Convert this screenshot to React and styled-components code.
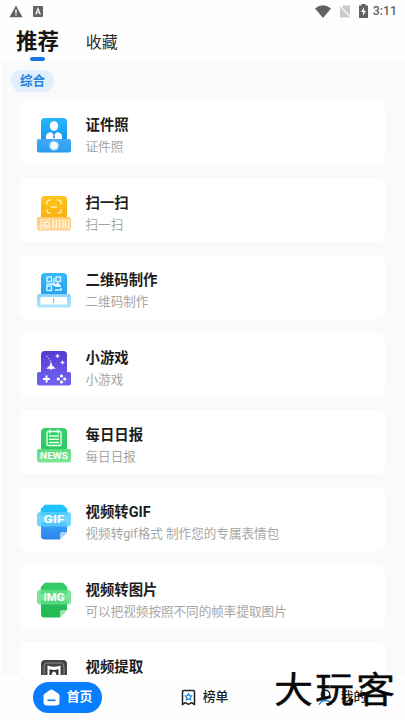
import React from "react"
import styled, { createGlobalStyle } from "styled-components"

const GlobalStyle = createGlobalStyle`
    * {
        box-sizing: border-box;
    }
    body {
        margin: 0;
        background: #fff;
        font-family: Roboto, "Noto Sans CJK SC", sans-serif;
    }
    svg {
        display: block;
        flex-shrink: 0;
    }
`

const Screen = styled.div`
    position: relative;
    display: flex;
    flex-direction: column;
    width: 405px;
    height: 720px;
    overflow: hidden;
    background: #fefefe;
`

const StatusBar = styled.div`
    display: flex;
    justify-content: space-between;
    align-items: center;
    height: 22px;
    padding: 0 8px 0 9px;
`

const StatusGroup = styled.div`
    display: flex;
    align-items: center;
    gap: ${({ $gap }) => $gap};
`

const Clock = styled.span`
    margin-left: -3px;
    color: #606060;
    font-size: 12.3px;
    font-weight: 500;
    line-height: 22px;
`

const Tabs = styled.div`
    display: flex;
    height: 39px;
    padding-left: 16px;
    gap: 27px;
`

const Tab = styled.div`
    display: flex;
    flex-direction: column;
    align-items: center;
    padding-top: ${({ $active }) => $active ? "2px" : "3px"};
    color: ${({ $active }) => $active ? "#151515" : "#2c2c2c"};
    font-size: ${({ $active }) => $active ? "21.4px" : "16px"};
    font-weight: ${({ $active }) => $active ? 700 : 400};
    line-height: 35px;
`

const TabLine = styled.div`
    width: 15px;
    height: 4px;
    margin-top: -2px;
    border-radius: 2px;
    background: #1478e6;
`

const Content = styled.div`
    flex: 1;
    min-height: 0;
    margin-left: 2px;
    padding: 9px 20px 0 9px;
    overflow: hidden;
    background: #fafafa;
`

const Category = styled.div`
    width: 43px;
    height: 22px;
    border-radius: 11px;
    background: #e1effc;
    color: #2183dc;
    font-size: 12.6px;
    font-weight: 700;
    line-height: 22px;
    text-align: center;
`

const List = styled.div`
    display: flex;
    flex-direction: column;
    gap: 13.4px;
    margin: 8.4px 0 0 9px;
`

const Card = styled.div`
    display: flex;
    flex-shrink: 0;
    height: 64px;
    padding: 17px 16px 0;
    border-radius: 7px;
    background: #fff;
`

const CardText = styled.div`
    margin: -1px 0 0 13.5px;
    white-space: nowrap;
`

const Title = styled.div`
    color: #1d1d1d;
    font-size: 14.4px;
    font-weight: 700;
    line-height: 20px;
`

const Desc = styled.div`
    margin-top: 1px;
    color: #a6a6a6;
    font-size: 12.58px;
    line-height: 19px;
`

const NavBar = styled.div`
    display: flex;
    flex-shrink: 0;
    align-items: center;
    height: 45px;
    padding-left: 33px;
    background: #fefefe;
`

const NavItem = styled.div`
    display: flex;
    flex-shrink: 0;
    align-items: center;
    justify-content: center;
    gap: 7px;
    width: 69px;
    height: 31px;
    margin-right: 68px;
    border-radius: 16px;
    background: ${({ $active }) => $active ? "#087eff" : "transparent"};
    color: ${({ $active }) => $active ? "#fff" : "#222"};
    font-size: 12.8px;
    font-weight: ${({ $active }) => $active ? 700 : 500};
    line-height: 29px;
    white-space: nowrap;
`

const NavLabel = styled.span`
    height: 31px;
`

const Watermark = styled.div`
    position: absolute;
    left: 274px;
    top: 665px;
    color: #080808;
    font-family: "Noto Sans CJK SC", sans-serif;
    font-size: 39px;
    font-weight: 400;
    line-height: 44px;
    letter-spacing: 2px;
    white-space: nowrap;
    transform: scaleY( 0.92 );
    -webkit-text-stroke: 0.4px #080808;
`

const Gradient = ({ id, from, to }) => (
    <linearGradient id={ id } x1="0" y1="0" x2="0" y2="1">
        <stop offset="0" stopColor={ from }/>
        <stop offset="1" stopColor={ to }/>
    </linearGradient>
)

// 위쪽 몸체 + 아래쪽 받침대 모양 아이콘
const StandIcon = ({ id, top, base, children }) => (
    <svg width="36" height="38" viewBox="0 0 36 38">
        <defs>
            <Gradient id={ `${id}_top` } from={ top[0] } to={ top[1] }/>
            <Gradient id={ `${id}_base` } from={ base[0] } to={ base[1] }/>
        </defs>
        <rect x="5" y="1" width="26" height="27" rx="4" fill={ `url(#${id}_top)` }/>
        <rect x="1" y="22" width="34" height="13.5" rx="2" fill={ `url(#${id}_base)` }/>
        { children }
    </svg>
)

// 모서리가 접힌 문서 모양 아이콘
const FileIcon = ({ id, top, bottom, band, fold, label }) => (
    <svg width="36" height="38" viewBox="0 0 36 38">
        <defs>
            <Gradient id={ `${id}_top` } from={ top[0] } to={ top[1] }/>
            <Gradient id={ `${id}_bottom` } from={ bottom[0] } to={ bottom[1] }/>
        </defs>
        <path d="M9 1H27L31 5V12H5V5Z" fill={ `url(#${id}_top)` } stroke={ top[0] } strokeLinejoin="round" strokeWidth=".6"/>
        <path d="M5 18H31V28L24 35.5H8.5Q5 35.5 5 32Z" fill={ `url(#${id}_bottom)` }/>
        <path d="M24 35.5V30Q24 28 26 28H31Z" fill={ fold }/>
        <rect x="1" y="8" width="34" height="14.5" rx="3" fill={ band }/>
        <text x="18" y="19" textAnchor="middle" textLength="21" lengthAdjust="spacingAndGlyphs" fill="#fff" fontSize="11" fontWeight="700">{ label }</text>
    </svg>
)

const PhotoIcon = () => (
    <StandIcon id="photo" top={ [ "#25b7fb", "#168eed" ] } base={ [ "#48a9f5", "#249df0" ] }>
        <ellipse cx="18" cy="9" rx="4.2" ry="4.8" fill="#fff"/>
        <path d="M10 22V19Q10 16 15 15L18 18L21 15Q26 16 26 19V22Z" fill="#fff"/>
        <path d="M18 16L16.8 21H19.2Z" fill="#209cee"/>
        <circle cx="18" cy="28.8" r="5" fill="#91d2fa"/>
        <circle cx="18" cy="28.8" r="3.7" fill="#f3fbff"/>
    </StandIcon>
)

const ScanIcon = () => (
    <StandIcon id="scan" top={ [ "#ffc51f", "#fba907" ] } base={ [ "#fdca72", "#ffdca2" ] }>
        <path d="M11 9V8Q11 5 14 5M22 5Q25 5 25 8V9M25 15V16Q25 18 22 18M14 18Q11 18 11 16V15M15.5 12H20.5" fill="none" stroke="#fff2ad" strokeWidth="1.5" strokeLinecap="round"/>
        <path d="M4 24.5H14M4 27.5H8M4 30.5H8M4 33H14M5 24V33" stroke="#fff1d2" strokeWidth=".9"/>
        <path d="M17 24V33M20.3 24V33M23.6 24V33M27 24V33M29.5 24V33M32.5 24V33" stroke="#fff6df" strokeWidth="1.3"/>
        <circle cx="10.8" cy="29" r="2.3" fill="none" stroke="#fffaf0" strokeWidth="1.2"/>
        <path d="M2 35H34" stroke="#f8c788" strokeDasharray="2 1"/>
    </StandIcon>
)

const QrIcon = () => (
    <StandIcon id="qr" top={ [ "#36b8f8", "#239dea" ] } base={ [ "#8dd3f9", "#b2e5fc" ] }>
        <g fill="none" stroke="#d9f4ff" strokeWidth="1.4">
            <rect x="11" y="5" width="4.5" height="4.5"/>
            <rect x="20" y="5" width="4.5" height="4.5"/>
            <rect x="11" y="14" width="4.5" height="4.5"/>
            <path d="M10 12H18L20 14H25M18 6V11M19 18H25V16"/>
        </g>
        <path d="M15 11L20 12L22 10L25 15L18 14Z" fill="#eefaff"/>
        <rect x="4.5" y="25" width="26.5" height="7.5" rx=".6" fill="#fff"/>
        <path d="M17.5 26.5V31" stroke="#8cbccc" strokeWidth="1.2"/>
    </StandIcon>
)

const GameIcon = () => (
    <StandIcon id="game" top={ [ "#523bd2", "#7558ed" ] } base={ [ "#6358e5", "#7562ef" ] }>
        <path d="M15 11L16.2 15.5L19.8 18.7H16.5L15 20L13.5 18.7H10.2L13.8 15.5Z" fill="#fff"/>
        <path d="M21.5 3.5L22.3 5.2L24 6L22.3 6.8L21.5 8.5L20.7 6.8L19 6L20.7 5.2ZM26.5 10L27.2 11.8L29 12.5L27.2 13.2L26.5 15L25.8 13.2L24 12.5L25.8 11.8Z" fill="#fff"/>
        <path d="M10.5 6L15 11" stroke="#cec4ff" strokeWidth="1.2" strokeDasharray="1.3 1.3"/>
        <path d="M10.5 25.5V32.5M7 29H14" stroke="#fff" strokeWidth="1.9"/>
        <g fill="#fff">
            <circle cx="25.5" cy="26" r="1.6"/>
            <circle cx="25.5" cy="32" r="1.6"/>
            <circle cx="22.3" cy="29" r="1.6"/>
            <circle cx="28.7" cy="29" r="1.6"/>
        </g>
    </StandIcon>
)

const NewsIcon = () => (
    <StandIcon id="news" top={ [ "#39ce6e", "#2bc861" ] } base={ [ "#5bdc7d", "#7ce796" ] }>
        <g fill="none" stroke="#e6ffe9" strokeWidth="1.4" strokeLinecap="round">
            <rect x="11" y="4.5" width="14" height="14" rx="1.5"/>
            <path d="M14 3V6M22 3V6M13.5 9H22.5M13.5 12.3H22.5M13.5 15.5H22.5"/>
        </g>
        <text x="18" y="32" textAnchor="middle" textLength="28" lengthAdjust="spacingAndGlyphs" fill="#fff" fontSize="8.8" fontWeight="700">NEWS</text>
    </StandIcon>
)

const GifIcon = () => (
    <FileIcon id="gif" top={ [ "#1ec5ff", "#20bdf9" ] } bottom={ [ "#38a2f8", "#3184ee" ] } band="#58cffbd9" fold="#a9d5fc" label="GIF"/>
)

const ImgIcon = () => (
    <FileIcon id="img" top={ [ "#31cb65", "#34cd68" ] } bottom={ [ "#2abd5c", "#20b953" ] } band="#60df86d9" fold="#9ee7b2" label="IMG"/>
)

const ExtractIcon = () => (
    <svg width="36" height="38" viewBox="0 0 36 38">
        <path d="M5 30V5Q5 1 9 1H27Q31 1 31 5V30Z" fill="#444"/>
        <path d="M8 30V8Q8 4 10.5 4H25.5Q28 4 28 8V30" fill="none" stroke="#8d8d8d" strokeWidth="1"/>
        <path d="M11.5 30V6.5Q18 9 24.5 6.5V30Z" fill="#fff"/>
        <path d="M13.5 30V10Q18 12 22.5 10V30Z" fill="#333"/>
        <path d="M15.8 30V14L18 12.2L20.2 14V30Z" fill="#fff"/>
    </svg>
)

const WarningIcon = () => (
    <svg width="14" height="13" viewBox="0 0 14 13">
        <path d="M7 .5L13.6 12.3H.4Z" fill="#626262"/>
        <path d="M7 4.5V8.2M7 9.3V10.6" stroke="#fff" strokeWidth="1.4"/>
    </svg>
)

const KeyboardIcon = () => (
    <svg width="10" height="11" viewBox="0 0 10 11">
        <rect width="10" height="11" rx="1" fill="#626262"/>
        <path d="M2.6 8.5L5 2.5L7.4 8.5M3.5 6.8H6.5" fill="none" stroke="#fff" strokeWidth="1.1"/>
    </svg>
)

const WifiIcon = () => (
    <svg width="16" height="13" viewBox="0 0 16 13">
        <path d="M0 3.5Q8-2.8 16 3.5L8 13Z" fill="#626262"/>
    </svg>
)

const NoSimIcon = () => (
    <svg width="12" height="13" viewBox="0 0 12 13">
        <path d="M4 .5H11V12.5H1V3.5Z" fill="#cacaca"/>
        <path d="M.5 1L11.5 12.5" stroke="#fff" strokeWidth="2.2"/>
        <path d="M0 1.5L11 12.7" stroke="#b5b5b5" strokeWidth="1"/>
    </svg>
)

const BatteryIcon = () => (
    <svg width="9" height="14" viewBox="0 0 9 14">
        <path d="M0 1.5H2.5V0H6.5V1.5H9V14H0Z" fill="#626262"/>
        <path d="M5.2 3L2 8H4.2L3.8 12L7 6.8H4.8Z" fill="#fff"/>
    </svg>
)

const HomeIcon = () => (
    <svg width="17" height="17" viewBox="0 0 17 17">
        <path d="M7 1Q8.5 0 10 1L15.5 4.8Q16.5 5.5 16.5 7V13Q16.5 16.5 13 16.5H4Q.5 16.5 .5 13V7Q.5 5.5 1.5 4.8Z" fill="#fff"/>
        <path d="M4.5 11.3H12.5" stroke="#087eff" strokeWidth="1.7"/>
    </svg>
)

const RankIcon = () => (
    <svg width="15" height="17" viewBox="0 0 15 17">
        <path d="M2.7 1.5H12.3Q13.5 1.5 13.5 2.7V15.5L10.7 13.7L7.5 15.3L4.3 13.7L1.5 15.5V2.7Q1.5 1.5 2.7 1.5Z" fill="#fff" stroke="#202020" strokeWidth="1.5" strokeLinejoin="round"/>
        <path d="M7.5 4.7L8.6 6.6L10.7 7L9.3 8.7L9.5 10.7L7.5 10L5.5 10.7L5.7 8.7L4.3 7L6.4 6.6Z" fill="none" stroke="#278bdc" strokeWidth="1.3"/>
    </svg>
)

const UserIcon = () => (
    <svg width="17" height="17" viewBox="0 0 17 17">
        <circle cx="8.5" cy="5.5" r="4.2" fill="none" stroke="#222" strokeWidth="1.4"/>
        <path d="M2 15.8Q4 11.5 8.5 11.5Q13 11.5 15 15.8" fill="none" stroke="#278bdc" strokeWidth="1.4"/>
    </svg>
)

const tools = [
    { title: "证件照", desc: "证件照", Icon: PhotoIcon },
    { title: "扫一扫", desc: "扫一扫", Icon: ScanIcon },
    { title: "二维码制作", desc: "二维码制作", Icon: QrIcon },
    { title: "小游戏", desc: "小游戏", Icon: GameIcon },
    { title: "每日日报", desc: "每日日报", Icon: NewsIcon },
    { title: "视频转GIF", desc: "视频转gif格式 制作您的专属表情包", Icon: GifIcon },
    { title: "视频转图片", desc: "可以把视频按照不同的帧率提取图片", Icon: ImgIcon },
    { title: "视频提取", desc: "", Icon: ExtractIcon },
]

const App = () => {
    return (
        <Screen>
            <GlobalStyle/>
            {/* 상태바 */}
            <StatusBar>
                <StatusGroup $gap="10px">
                    <WarningIcon/>
                    <KeyboardIcon/>
                </StatusGroup>
                <StatusGroup $gap="8px">
                    <WifiIcon/>
                    <NoSimIcon/>
                    <BatteryIcon/>
                    <Clock>3:11</Clock>
                </StatusGroup>
            </StatusBar>
            {/* 상단 탭 */}
            <Tabs>
                <Tab $active>
                    推荐
                    <TabLine/>
                </Tab>
                <Tab>收藏</Tab>
            </Tabs>
            {/* 목록 */}
            <Content>
                <Category>综合</Category>
                <List>
                    {
                        tools.map(({ title, desc, Icon }) => (
                            <Card key={ title }>
                                <Icon/>
                                <CardText>
                                    <Title>{ title }</Title>
                                    <Desc>{ desc }</Desc>
                                </CardText>
                            </Card>
                        ))
                    }
                </List>
            </Content>
            {/* 하단 메뉴 */}
            <NavBar>
                <NavItem $active><HomeIcon/><NavLabel>首页</NavLabel></NavItem>
                <NavItem><RankIcon/><NavLabel>榜单</NavLabel></NavItem>
                <NavItem><UserIcon/><NavLabel>我的</NavLabel></NavItem>
            </NavBar>
            <Watermark>大玩客</Watermark>
        </Screen>
    )
}

export default App
